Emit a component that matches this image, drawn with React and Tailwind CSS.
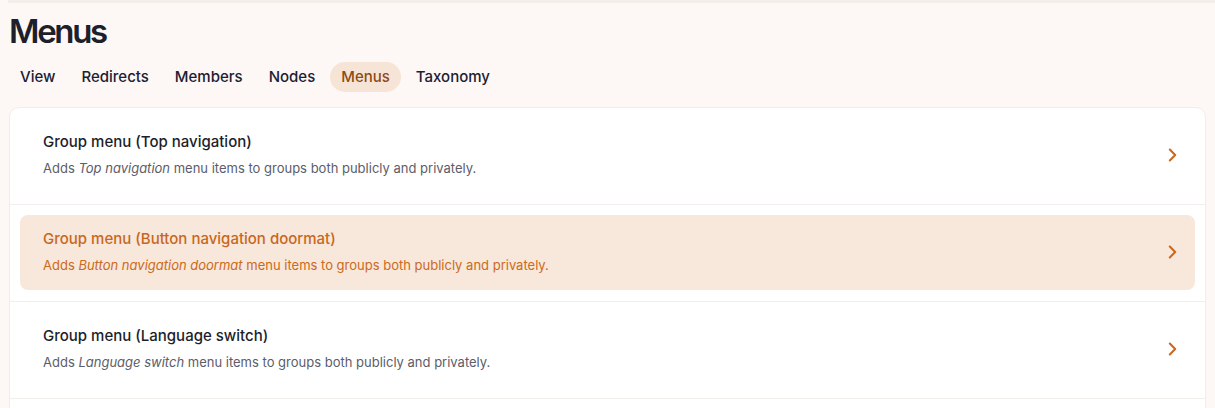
const tabs = ['View', 'Redirects', 'Members', 'Nodes', 'Menus', 'Taxonomy'];

const menus = [
  { title: 'Group menu (Top navigation)', name: 'Top navigation' },
  { title: 'Group menu (Button navigation doormat)', name: 'Button navigation doormat', active: true },
  { title: 'Group menu (Language switch)', name: 'Language switch' },
];

const Chevron = () => (
  <svg width="9" height="14" viewBox="0 0 9 14" fill="none" className="mr-[-5px] text-[#cd661a]">
    <path d="M1.8 1.5 7.2 7 1.8 12.5" stroke="currentColor" strokeWidth="2" strokeLinecap="round" strokeLinejoin="round" />
  </svg>
);

export default function App() {
  return (
    <div className="h-[408px] overflow-hidden bg-[#fdf8f5] font-['Inter',sans-serif] text-[#1e2030]">
      <div className="ml-[8px] h-[3px] bg-[#f3eeea]" />
      <div className="px-[9px]">
        <h1 className="mt-[8px] text-[33px] font-semibold leading-[40px] tracking-[-0.07em] text-[#1d1f2c]">Menus</h1>

        <nav className="mt-[11px] flex gap-[4px]">
          {tabs.map((tab) => (
            <a
              key={tab}
              className={`rounded-full px-[11px] py-[5px] text-[15px] font-medium leading-[20px] ${
                tab === 'Menus' ? 'bg-[#f6e4d6] text-[#8e4a17]' : 'text-[#1c2033]'
              }`}
            >
              {tab}
            </a>
          ))}
        </nav>

        <div className="mt-[15px] rounded-[10px] border border-[#f1ede9] bg-white pb-[40px]">
          {menus.map((m) => (
            <div key={m.title} className="border-b border-[#f1eeeb] px-[10px] pt-[10px] pb-[11px]">
              <a
                className={`flex items-center rounded-[8px] px-[23px] pt-[13px] pb-[15px] ${
                  m.active ? 'bg-[#f8e7db]' : ''
                }`}
              >
                <div className="flex-1">
                  <p className={`text-[15px] font-medium leading-[22px] ${m.active ? 'text-[#c8671d]' : 'text-[#1c1e2b]'}`}>
                    {m.title}
                  </p>
                  <p className={`mt-[5px] text-[13px] leading-[20px] ${m.active ? 'text-[#cb6a20]' : 'text-[#5b5d6a]'}`}>
                    Adds <em>{m.name}</em> menu items to groups both publicly and privately.
                  </p>
                </div>
                <Chevron />
              </a>
            </div>
          ))}
        </div>
      </div>
    </div>
  );
}
